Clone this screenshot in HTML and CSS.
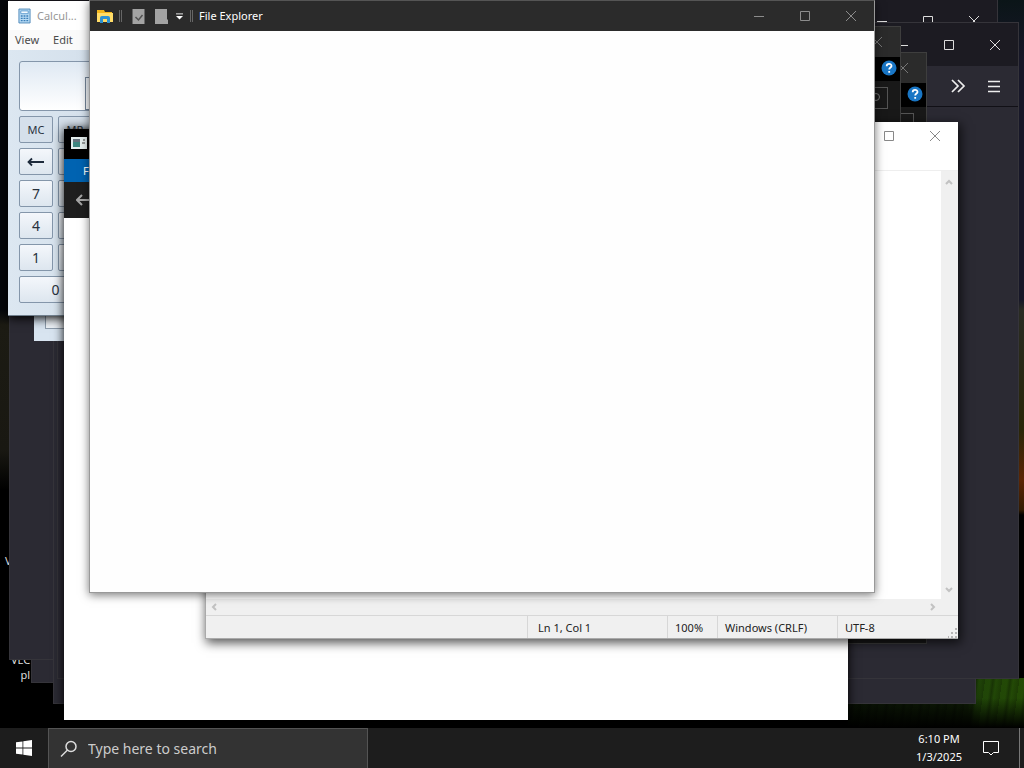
FILE: index.html
```html
<!DOCTYPE html>
<html lang="en">
<head>
<meta charset="utf-8">
<title>Desktop</title>
<link rel="stylesheet" href="styles.css">
</head>
<body>
<svg class="symbols" aria-hidden="true">
  <symbol id="min" viewBox="0 0 12 12"><path d="M1 6.5h10"/></symbol>
  <symbol id="max" viewBox="0 0 12 12"><path d="M1.500 1.500h9v9h-9z"/></symbol>
  <symbol id="close" viewBox="0 0 12 12"><path d="M1 1l10 10M11 1L1 11"/></symbol>
  <symbol id="help" viewBox="0 0 16 16"><circle cx="8" cy="8" r="7.500" fill="#1976c5" stroke="none"/><path d="M5.700 6.200c0-3.200 4.800-3 4.800-.3 0 1.600-2.300 1.500-2.300 3.500M8.200 11v1.800" stroke="#fff" stroke-width="1.800"/></symbol>
</svg>
<main class="desktop">
  <span class="shortcut shortcut-v">V</span>
  <span class="shortcut shortcut-vlc">VLC<br>pl</span>

  <section class="window browser browser-d"></section>
  <section class="window browser browser-a">
    <div class="browser-caption">
      <button aria-label="Minimize"><svg><use href="#min"/></svg></button>
      <button aria-label="Maximize"><svg><use href="#max"/></svg></button>
      <button aria-label="Close"><svg><use href="#close"/></svg></button>
    </div>
  </section>
  <section class="window browser browser-c"></section>
  <section class="window browser browser-b">
    <div class="browser-caption">
      <button aria-label="Minimize"><svg><use href="#min"/></svg></button>
      <button aria-label="Maximize"><svg><use href="#max"/></svg></button>
      <button aria-label="Close"><svg><use href="#close"/></svg></button>
    </div>
    <div class="browser-tools">
      <button aria-label="More tools"><svg viewBox="0 0 16 16"><path d="M2 2l6 6-6 6M8 2l6 6-6 6"/></svg></button>
      <button aria-label="Menu"><svg viewBox="0 0 16 16"><path d="M2 3.500h12M2 8.500h12M2 13.500h12"/></svg></button>
    </div>
  </section>

  <section class="window folder folder-b">
    <div class="folder-caption"><button aria-label="Close"><svg><use href="#close"/></svg></button></div>
    <div class="folder-ribbon"><button aria-label="Help"><svg><use href="#help"/></svg></button></div>
    <div class="folder-search"><button aria-label="Search"></button></div>
  </section>
  <section class="window folder folder-a">
    <div class="folder-caption"><button aria-label="Close"><svg><use href="#close"/></svg></button></div>
    <div class="folder-ribbon"><button aria-label="Help"><svg><use href="#help"/></svg></button></div>
    <div class="folder-search"><button aria-label="Search"><svg viewBox="0 0 12 12"><circle cx="7" cy="5" r="3.500"/><path d="M4 8l-3 3"/></svg></button></div>
  </section>

  <section class="window calc calc-back"><div class="calc-ghost"></div></section>
  <section class="window calc calc-front">
    <header class="calc-title">
      <svg class="calc-icon" viewBox="0 0 14 16"><path d="M1 .5h12v15H1z" fill="#b9dcf5" stroke="#4c86b8"/><path d="M3 2.500h8v3H3z" fill="#f5fbff" stroke="#5d9bce"/><path d="M3 8h2M6 8h2M9 8h2M3 10.500h2M6 10.500h2M9 10.500h2M3 13h2M6 13h2M9 13h2" stroke="#3c7fb9" stroke-width="1.500"/></svg>
      <span>Calcul...</span>
    </header>
    <nav class="calc-menu"><button>View</button><button>Edit</button></nav>
    <div class="calc-body">
      <div class="calc-display"><div class="calc-display-edge"></div></div>
      <div class="calc-keys">
        <button class="memory">MC</button><button class="memory">MR</button>
        <button aria-label="Backspace"><svg viewBox="0 0 18 10"><path d="M1 5h16M5 1.500L1.500 5 5 8.500" fill="none" stroke="#1e2b3c" stroke-width="1.800"/></svg></button><button></button>
        <button>7</button><button></button>
        <button>4</button><button></button>
        <button>1</button><button></button>
        <button class="zero">0</button>
      </div>
    </div>
  </section>

  <section class="window app">
    <header class="app-title"><svg viewBox="0 0 16 12"><path d="M0 0h16v12H0z" fill="#e4eeee"/><path d="M2 2h7v8H2z" fill="#3e8781"/><path d="M2 2h7v3H2z" fill="#66737e"/><path d="M11 6h3M13 2v2" stroke="#444"/></svg></header>
    <div class="app-tab"><button>File</button></div>
    <div class="app-tools"><button aria-label="Back"><svg viewBox="0 0 16 12"><path d="M1 6h15M6 1L1 6l5 5" fill="none" stroke="#a5a5a5" stroke-width="2"/></svg></button></div>
  </section>

  <section class="window notepad">
    <header class="notepad-title">
      <button aria-label="Maximize"><svg><use href="#max"/></svg></button>
      <button aria-label="Close"><svg><use href="#close"/></svg></button>
    </header>
    <div class="notepad-main">
      <textarea class="notepad-text" aria-label="Document text"></textarea>
      <div class="scroll-v"><svg viewBox="0 0 8 6"><path d="M1 5l3-3 3 3"/></svg><svg viewBox="0 0 8 6"><path d="M1 1l3 3 3-3"/></svg></div>
    </div>
    <div class="scroll-h"><svg viewBox="0 0 6 8"><path d="M5 1L2 4l3 3"/></svg><svg viewBox="0 0 6 8"><path d="M1 1l3 3-3 3"/></svg></div>
    <footer class="status">
      <span class="status-blank"></span><span class="status-position">Ln 1, Col 1</span><span class="status-zoom">100%</span><span class="status-line">Windows (CRLF)</span><span class="status-encoding">UTF-8</span>
      <svg class="grip" viewBox="0 0 10 10"><path d="M7 0h2v2H7zM7 4h2v2H7zM7 8h2v2H7zM3 4h2v2H3zM3 8h2v2H3zM0 8h1v2H0z" fill="#b5b5b5"/></svg>
    </footer>
  </section>

  <section class="window explorer">
    <header class="explorer-title">
      <svg class="folder-icon" viewBox="0 0 18 16"><path d="M1 2h7l1 2h7v9H1z" fill="#f1b51c"/><path d="M1 5h16v9H1z" fill="#ffdc68"/><path d="M4 15v-5q0-2 2-2h6q2 0 2 2v5h-3v-4H7v4z" fill="#2c91d2"/></svg>
      <i class="rule"></i>
      <button aria-label="Properties"><svg viewBox="0 0 12 15"><path d="M0 0h12v15H0z" fill="#a3a3a3"/><path d="M3 8l3 3 4-5" fill="none" stroke="#525252" stroke-width="1.500"/></svg></button>
      <button aria-label="New folder"><svg viewBox="0 0 13 15"><path d="M0 0h12v10l1 1v4H0z" fill="#a3a3a3"/></svg></button>
      <button class="customize" aria-label="Customize toolbar"><svg viewBox="0 0 8 7"><path d="M0 .5h8" stroke="#fff"/><path d="M0 3h8L4 7z" fill="#fff"/></svg></button>
      <i class="rule"></i>
      <h1>File Explorer</h1>
      <div class="caption">
        <button aria-label="Minimize"><svg><use href="#min"/></svg></button>
        <button aria-label="Maximize"><svg><use href="#max"/></svg></button>
        <button aria-label="Close"><svg><use href="#close"/></svg></button>
      </div>
    </header>
    <div class="explorer-content"></div>
  </section>
</main>
<footer class="taskbar">
  <button class="start" aria-label="Start"><svg viewBox="0 0 16 16"><path d="M0 2.300L6.500 1.400v6.200H0zM7.300 1.300L16 0v7.600H7.300zM0 8.400h6.500v6.200L0 13.700zM7.300 8.400H16V16l-8.700-1.300z" fill="#fff"/></svg></button>
  <label class="search"><svg viewBox="0 0 18 18"><circle cx="11" cy="6.500" r="5"/><path d="M7.500 10L1 16.500"/></svg><input type="text" placeholder="Type here to search" aria-label="Type here to search"></label>
  <div class="clock"><time>6:10 PM</time><time>1/3/2025</time></div>
  <button class="notifications" aria-label="Notifications"><svg viewBox="0 0 16 16"><path d="M.5 1.500h15v11h-5L8 15l-2.500-2.500h-5z" fill="none" stroke="#fff"/></svg></button>
</footer>
</body>
</html>
```
FILE: styles.css
```css
* { box-sizing: border-box; }
body {
  display: flex;
  flex-direction: column;
  height: 100vh;
  margin: 0;
  overflow: hidden;
  background: #000;
  font-family: "Noto Sans", "Open Sans", sans-serif;
  font-size: 11px;
  line-height: 16px;
}
button { margin: 0; padding: 0; border: 0; background: none; color: inherit; font: inherit; }
svg { display: block; flex: none; }
.symbols { display: none; }

.desktop {
  position: relative;
  flex: 1;
  min-height: 0;
  overflow: hidden;
  background:
    linear-gradient(#0000 20px, #000b 42px, #000) right bottom / 176px 50px no-repeat,
    repeating-linear-gradient(98deg, #0000 0 5px, #0004 8px, #0000 11px, #0003 17px) right bottom / 176px 50px no-repeat,
    linear-gradient(90deg, #0a1405, #0e1c05 68%, #204508 75%, #244b05) right bottom / 176px 50px no-repeat,
    linear-gradient(#0b1518 0, #171728 60px, #171728 300px, #292b23 310px, #292608 430px, #5b2504 480px, #321b02 510px, #000 515px) right top / 40px 100% no-repeat,
    linear-gradient(#05070b 0, #05070b 310px, #1c1b13 325px, #191812 450px, #000 490px) left top / 60px 100% no-repeat,
    #000;
}
.window { position: absolute; display: flex; flex-direction: column; overflow: hidden; }
.shortcut { position: absolute; color: #ddd; line-height: 15px; }
.shortcut-v { top: 553px; left: 5px; }
.shortcut-vlc { top: 652px; left: 11px; padding-right: 4px; text-align: right; }

.browser { border: 1px solid #35343a; background: #2b2a33; color: #ddd; }
.browser-d { top: 40px; left: 31px; width: 500px; height: 643px; }
.browser-a { top: -2px; left: 9px; width: 989px; height: 662px; }
.browser-c { top: 40px; left: 53px; width: 923px; height: 664px; }
.browser-b { top: 22px; left: 57px; width: 962px; height: 657px; }
.browser-caption { display: flex; justify-content: flex-end; height: 43px; background: #1c1b22; }
.browser-caption button { display: grid; place-items: center; width: 46px; }
.browser-caption svg, .folder svg, .notepad-title svg, .caption svg { width: 12px; height: 12px; fill: none; stroke: currentColor; }
.browser-tools { display: flex; align-items: center; justify-content: flex-end; gap: 20px; height: 41px; padding-right: 16px; border-bottom: 1px solid #111016; }
.browser-tools svg { width: 16px; height: 16px; fill: none; stroke: #eee; stroke-width: 2; }
.browser-tools svg path { stroke-width: 1.700; }

.folder { width: 500px; height: 592px; border: 1px solid #3e3e3e; background: #191919; color: #777; }
.folder-a { top: 26px; left: 401px; }
.folder-b { top: 52px; left: 427px; }
.folder-caption, .folder-ribbon, .folder-search { display: flex; align-items: center; justify-content: flex-end; }
.folder-caption { height: 30px; padding-right: 17px; background: #2b2b2b; }
.folder .folder-ribbon { height: 24px; padding: 0 3px 2px 0; background: #000; }
.folder .folder-ribbon svg { width: 16px; height: 16px; }
.folder-search { height: 34px; padding-right: 12px; }
.folder-search button { display: flex; align-items: center; justify-content: flex-end; width: 150px; height: 22px; padding-right: 6px; border: 1px solid #555; }

.calc { background: #d8e4f0; }
.calc-back { top: 27px; left: 34px; width: 180px; height: 314px; justify-content: flex-end; padding: 12px 11px; }
.calc-ghost { height: 28px; border: 1px solid #8d9cac; background: #eef3f8; }
.calc-front { top: 1px; left: 8px; width: 190px; height: 315px; border-bottom: 1px solid #71808e; color: #4a4a4a; box-shadow: 0 2px 10px #000; }
.calc-title { display: flex; align-items: center; gap: 6px; height: 29px; padding-left: 10px; background: #fff; color: #969696; }
.calc-icon { width: 13px; height: 16px; }
.calc-menu { display: flex; gap: 14px; height: 20px; padding-left: 7px; background: #fafafa; }
.calc-menu button { line-height: 20px; }
.calc-body { flex: 1; padding: 11px; background: linear-gradient(90deg, #dce7f1, #cbd8e5); }
.calc-display { display: flex; align-items: flex-end; height: 50px; margin-bottom: 5px; padding-left: 65px; border: 1px solid #8496aa; border-radius: 3px; background: linear-gradient(#dfe9f3, #fff); }
.calc-display-edge { width: 90px; height: 33px; border: 1px solid #748598; }
.calc-keys { display: grid; grid-template-columns: 34px 34px; gap: 5px; }
.calc-keys button { display: grid; place-items: center; height: 27px; border: 1px solid #8496aa; border-radius: 2px; background: linear-gradient(#f4f7fb, #dde6ef); color: #29323d; font-size: 14px; }
.calc-keys .memory { background: #d5e0eb; font-size: 11px; }
.calc-keys .zero { grid-column: span 2; }
.calc-keys svg { width: 18px; height: 10px; }

.app { top: 129px; left: 64px; width: 784px; height: 591px; background: #fff; color: #fff; box-shadow: 0 0 10px #000; }
.app-title { display: flex; align-items: center; height: 30px; padding: 0 7px 2px; background: #000; }
.app-title svg { width: 16px; height: 12px; }
.app-tab { height: 23px; background: #0063b1; }
.app-tab button { padding-left: 19px; line-height: 23px; }
.app-tools { display: flex; align-items: center; height: 36px; padding-left: 12px; background: #1e1e1e; }
.app-tools svg { width: 16px; height: 12px; }

.notepad { top: 122px; left: 205px; width: 753px; height: 517px; border: 1px solid #aaa; border-top: 0; border-right: 0; background: #fff; color: #222; box-shadow: 2px 3px 10px 1px #000a; }
.notepad-title { display: flex; justify-content: flex-end; height: 49px; padding-bottom: 21px; border-bottom: 1px solid #eee; color: #888; }
.notepad-title button { display: grid; place-items: center; width: 46px; }
.notepad-main { display: flex; flex: 1; min-height: 0; }
.notepad-text { flex: 1; border: 0; padding: 4px; resize: none; }
.scroll-v { display: flex; flex-direction: column; justify-content: space-between; width: 17px; padding: 8px 5px 6px 4px; background: #f0f0f0; }
.scroll-h { display: flex; justify-content: space-between; align-items: center; height: 16px; padding: 0 22px 0 5px; background: #f0f0f0; }
.scroll-v svg { width: 8px; height: 6px; }
.scroll-h svg { width: 6px; height: 8px; }
.scroll-v svg, .scroll-h svg { fill: none; stroke: #c2c2c2; stroke-width: 2; }
.status { display: flex; align-items: flex-end; height: 23px; border-top: 1px solid #d7d7d7; background: #f0f0f0; line-height: 23px; }
.status span { height: 22px; padding-left: 7px; border-left: 1px solid #d7d7d7; }
.status .status-blank { flex: 1; border: 0; }
.status .status-position { width: 140px; padding-left: 10px; }
.status-zoom { width: 50px; }
.status-line { width: 120px; }
.status-encoding { width: 111px; }
.grip { width: 10px; height: 10px; }

.explorer { top: 0; left: 89px; width: 786px; height: 593px; border: 1px solid #999; border-top-color: #555; background: #fefefe; box-shadow: 0 2px 9px #0008; }
.explorer-title { display: flex; align-items: center; height: 30px; padding-left: 6px; background: #2b2b2b; color: #fff; }
.folder-icon { width: 18px; height: 16px; margin-right: 5px; }
.rule { width: 3px; height: 12px; border: solid #666; border-width: 0 1px; }
.explorer-title > button { margin-left: 10px; }
.explorer-title > button svg { width: 13px; height: 15px; }
.explorer-title .customize { margin: 0 7px 0 8px; }
.explorer-title .customize svg { width: 7px; height: 7px; }
.explorer h1 { margin: 0 0 0 6px; font-size: 11px; font-weight: 400; line-height: 16px; }
.caption { display: flex; align-self: stretch; margin-left: auto; color: #8c8c8c; }
.caption button { display: grid; place-items: center; width: 46px; }
.explorer-content { flex: 1; background: #fefefe; }

.taskbar { display: flex; flex: none; height: 40px; background: #1d1d1d; color: #fff; }
.start { display: grid; place-items: center; width: 48px; }
.start svg { width: 16px; height: 16px; }
.search { display: flex; align-items: center; gap: 10px; width: 320px; padding-left: 11px; border: 1px solid #545454; border-bottom: 0; background: #333; }
.search svg { width: 18px; height: 18px; fill: none; stroke: #ddd; stroke-width: 1.500; }
.search input { flex: 1; min-width: 0; border: 0; padding: 0; outline: 0; background: none; color: #ccc; font: 14px/20px "Noto Sans", "Open Sans", sans-serif; }
.search input::placeholder { color: #ccc; opacity: 1; }
.clock { display: flex; flex-direction: column; justify-content: center; margin-left: auto; padding-bottom: 1px; text-align: center; line-height: 18px; }
.notifications { display: grid; place-items: center; width: 58px; margin-right: 4px; border-right: 1px solid #777; }
.notifications svg { width: 16px; height: 16px; }
```
